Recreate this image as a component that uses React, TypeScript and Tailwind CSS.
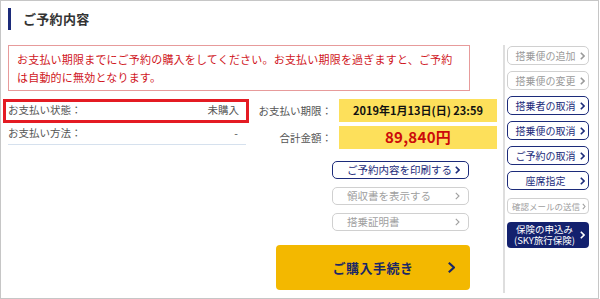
import React from "react";

const NAVY = "#1c2b7a";

function Chev({ color = NAVY, w = 5, h = 8, sw = 1.6 }: { color?: string; w?: number; h?: number; sw?: number }) {
  return (
    <svg width={w} height={h} viewBox={`0 0 ${w} ${h}`} className="shrink-0">
      <path d={`M0.8 0.8 L${w - 1} ${h / 2} L0.8 ${h - 0.8}`} fill="none" stroke={color} strokeWidth={sw} />
    </svg>
  );
}

function SideBtn({ label, active }: { label: string; active: boolean }) {
  return (
    <div
      className={
        active
          ? "flex items-center h-[19px] w-[82px] rounded-[5px] border border-[#1c2b7a] text-[#1c2b7a] bg-white"
          : "flex items-center h-[19px] w-[82px] rounded-[5px] border border-[#d0d0d0] text-[#9a9a9a] bg-white"
      }
    >
      <span className="flex-1 text-center text-[10px] leading-none pl-[3px] whitespace-nowrap">{label}</span>
      <span className="mr-[3px] flex items-center">
        <Chev color={active ? NAVY : "#9a9a9a"} />
      </span>
    </div>
  );
}

export default function App() {
  return (
    <div
      className="w-[599px] h-[299px] border border-[#c6c6c6] bg-white text-[#444]"
      style={{ fontFamily: '"Noto Sans CJK JP", "Noto Sans", sans-serif' }}
    >
      <div className="pl-[7px] pt-[7px]">
        <div className="h-[22px] border-l-[3px] border-[#1c2b7a] pl-[12px] flex items-center text-[13px] font-bold text-[#333] tracking-[0.3px]">
          ご予約内容
        </div>
      </div>
      <div className="flex mt-[15px]">
        {/* main */}
        <div className="ml-[7px] w-[490px]">
          <div className="w-[462px] h-[46px] border border-[#e79b9b] pl-[8px] pt-[4px] text-[11px] leading-[18px] tracking-[0.2px] text-[#d0161d]">
            お支払い期限までにご予約の購入をしてください。お支払い期限を過ぎますと、ご予約
            <br />
            は自動的に無効となります。
          </div>
          <div className="flex mt-[8px]">
            {/* left info */}
            <div className="relative w-[238px] text-[10.5px] text-[#555]">
              <div className="flex items-center justify-between h-[23px] border-b border-[#d6e1ee] pr-[7px]">
                <span>お支払い状態：</span>
                <span>未購入</span>
              </div>
              <div className="flex items-center justify-between h-[23px] border-b border-[#d6e1ee] pr-[8px]">
                <span>お支払い方法：</span>
                <span>-</span>
              </div>
              <div className="absolute -left-[5px] top-0 w-[246px] h-[24px] border-[3px] border-[#e41b23]" />
            </div>
            {/* middle */}
            <div className="ml-[12px] w-[239px]">
              <div className="flex items-center h-[23px]">
                <span className="w-[74px] flex justify-end whitespace-nowrap text-[10.5px] text-[#555]">お支払い期限：</span>
                <div className="ml-[7px] w-[158px] h-[23px] bg-[#fde05b] flex items-center justify-center text-[11px] font-bold text-[#111]">
                  2019年1月13日(日) 23:59
                </div>
              </div>
              <div className="flex items-center h-[23px] mt-[4px]">
                <span className="w-[74px] flex justify-end whitespace-nowrap text-[10.5px] text-[#555]">合計金額：</span>
                <div className="ml-[7px] w-[158px] h-[23px] bg-[#fde05b] flex items-center justify-center text-[15px] font-bold text-[#cc0a0a] tracking-[0.3px]">
                  89,840円
                </div>
              </div>
              <div className="ml-[74px] mt-[12px] flex flex-col gap-[8px]">
                <div className="flex items-center h-[18px] w-[137px] rounded-[5px] border border-[#1c2b7a] text-[#1c2b7a]">
                  <span className="pl-[14px] flex-1 text-[10.5px] leading-none">ご予約内容を印刷する</span>
                  <span className="mr-[8px] flex items-center"><Chev /></span>
                </div>
                <div className="flex items-center h-[18px] w-[137px] rounded-[5px] border border-[#d0d0d0] text-[#a0a0a0]">
                  <span className="pl-[14px] flex-1 text-[10.5px] leading-none">領収書を表示する</span>
                  <span className="mr-[8px] flex items-center"><Chev color="#a0a0a0" sw={1.1} /></span>
                </div>
                <div className="flex items-center h-[18px] w-[137px] rounded-[5px] border border-[#d0d0d0] text-[#a0a0a0]">
                  <span className="pl-[14px] flex-1 text-[10.5px] leading-none">搭乗証明書</span>
                  <span className="mr-[8px] flex items-center"><Chev color="#a0a0a0" sw={1.1} /></span>
                </div>
              </div>
              <div className="ml-[18px] mt-[14px] w-[194px] h-[45px] rounded-[4px] bg-[#f3b800] relative flex items-center justify-center">
                <span className="text-[13px] font-bold text-[#1a2766] tracking-[0.5px]">ご購入手続き</span>
                <span className="absolute right-[15px] top-0 bottom-0 flex items-center">
                  <Chev color="#1a2766" w={7} h={11} sw={2.2} />
                </span>
              </div>
            </div>
          </div>
        </div>
        {/* sidebar */}
        <div className="ml-[5px] h-[248px] border-l-2 border-[#dedede] pl-[2px] pt-[1px] flex flex-col">
          <div className="flex flex-col gap-[6px]">
            <SideBtn label="搭乗便の追加" active={false} />
            <SideBtn label="搭乗便の変更" active={false} />
            <SideBtn label="搭乗者の取消" active={true} />
            <SideBtn label="搭乗便の取消" active={true} />
            <SideBtn label="ご予約の取消" active={true} />
            <SideBtn label="座席指定" active={true} />
          </div>
          <div className="mt-[8px] flex items-center h-[16px] w-[82px] rounded-[4px] border border-[#d0d0d0] text-[#a0a0a0]">
            <span className="flex-1 text-center text-[8.5px] leading-none whitespace-nowrap pl-[2px]">確認メールの送信</span>
            <span className="mr-[2px] flex items-center"><Chev color="#a0a0a0" w={4} h={7} sw={1.1} /></span>
          </div>
          <div className="mt-[8px] flex items-center h-[26px] w-[82px] rounded-[4px] bg-[#13216e] text-white">
            <span className="flex-1 text-center pl-[2px] text-[9.5px] leading-[11px] whitespace-nowrap">
              保険の申込み
              <br />
              (SKY旅行保険)
            </span>
            <span className="mr-[4px] flex items-center"><Chev color="#ffffff" /></span>
          </div>
        </div>
      </div>
    </div>
  );
}
